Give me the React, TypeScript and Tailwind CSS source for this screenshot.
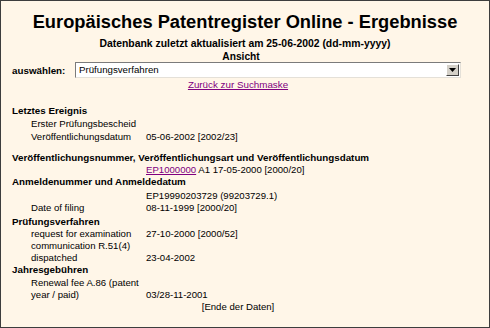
import React from 'react';

interface RowProps {
  label?: React.ReactNode;
  value?: React.ReactNode;
  className?: string;
}

// one label/value line of the result table
function Row({ label, value, className = '' }: RowProps) {
  return (
    <div className={`flex h-[12px] leading-[12px] text-[9.6px] ${className}`}>
      <div className="w-[115px] pl-[30px] shrink-0 box-content whitespace-nowrap">{label}</div>
      <div className="whitespace-nowrap">{value}</div>
    </div>
  );
}

function Heading({ children, className = '' }: { children: React.ReactNode; className?: string }) {
  return (
    <div className={`h-[12px] leading-[12px] pl-[11px] text-[9.8px] font-bold whitespace-nowrap ${className}`}>
      {children}
    </div>
  );
}

export default function App() {
  return (
    <div className="w-[490px] h-[328px] border border-[#3d3d3d] bg-[#fff6e8] text-black font-['Liberation_Sans',Arial,sans-serif] overflow-hidden">
      {/* Title block */}
      <h1 className="pt-[10px] text-center text-[18.3px] leading-[22px] font-bold">
        Europäisches Patentregister Online - Ergebnisse
      </h1>
      <p className="mt-[5px] text-center text-[10.4px] leading-[12px] font-bold">
        Datenbank zuletzt aktualisiert am 25-06-2002 (dd-mm-yyyy)
      </p>
      <p className="mt-px pr-[8px] text-center text-[10.2px] leading-[12px] font-bold">Ansicht</p>

      {/* View selector */}
      <div className="-mt-px flex h-[16px] items-center">
        <div className="w-[74px] pl-[11px] pt-[2px] text-[9.8px] font-bold leading-[12px]">auswählen:</div>
        <div className="flex h-[16px] w-[386px] border border-t-[#7b7b7b] border-l-[#7b7b7b] border-b-[#e4e0d8] border-r-[#e4e0d8] bg-white">
          <div className="flex-1 pl-[3px] text-[9.7px] leading-[14px]">Prüfungsverfahren</div>
          <div className="m-px flex w-[13px] items-center justify-center border border-t-white border-l-white border-b-[#404040] border-r-[#404040] bg-[#d4d0c8]">
            <svg width="7" height="4" viewBox="0 0 7 4">
              <path d="M0 0h7L3.5 4z" fill="#000" />
            </svg>
          </div>
        </div>
      </div>
      <p className="mt-px pr-[14px] text-center text-[9.8px] leading-[12px]">
        <a href="#" className="text-[#800080] underline">Zurück zur Suchmaske</a>
      </p>

      {/* Result data */}
      <div className="mt-[13px]">
        <Heading className="h-[13px] leading-[13px]">Letztes Ereignis</Heading>
        <Row className="h-[13px] leading-[13px]" label="Erster Prüfungsbescheid" />
        <Row className="h-[13px] leading-[13px]" label="Veröffentlichungsdatum" value="05-06-2002 [2002/23]" />

        <Heading className="mt-[9px]">
          Veröffentlichungsnummer, Veröffentlichungsart und Veröffentlichungsdatum
        </Heading>
        <Row
          value={
            <>
              <a href="#" className="text-[#800080] underline">EP1000000</a> A1 17-05-2000 [2000/20]
            </>
          }
        />
        <Heading>Anmeldenummer und Anmeldedatum</Heading>
        <Row className="mt-[2px]" value="EP19990203729 (99203729.1)" />
        <Row label="Date of filing" value="08-11-1999 [2000/20]" />

        <Heading className="mt-[2px]">Prüfungsverfahren</Heading>
        <Row label="request for examination" value="27-10-2000 [2000/52]" />
        <Row label="communication R.51(4)" />
        <Row label="dispatched" value="23-04-2002" />

        <Heading>Jahresgebühren</Heading>
        <Row className="mt-px" label="Renewal fee A.86 (patent" />
        <Row label="year / paid)" value="03/28-11-2001" />

        <p className="pr-[14px] text-center text-[9.6px] leading-[12px]">[Ende der Daten]</p>
      </div>
    </div>
  );
}
